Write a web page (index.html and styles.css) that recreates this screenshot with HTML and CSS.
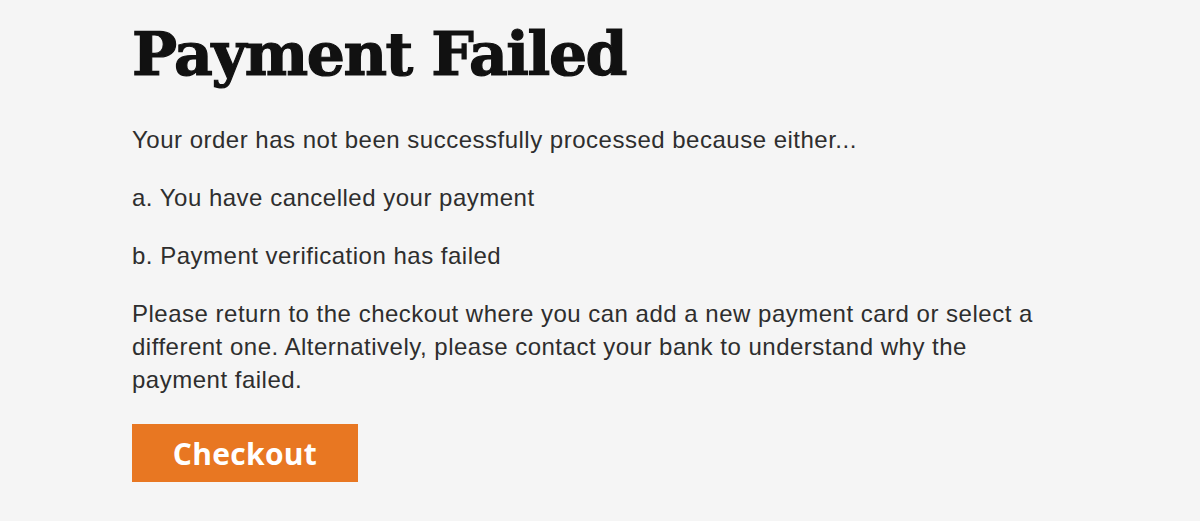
FILE: index.html
```html
<!DOCTYPE html>
<html lang="en">
<head>
<meta charset="utf-8">
<title>Payment Failed</title>
<link rel="stylesheet" href="styles.css">
</head>
<body>
<main class="page">
  <h1 class="title">Payment Failed</h1>
  <p class="text">Your order has not been successfully processed because either...</p>
  <p class="text">a. You have cancelled your payment</p>
  <p class="text">b. Payment verification has failed</p>
  <p class="text">Please return to the checkout where you can add a new payment card or select a different one. Alternatively, please contact your bank to understand why the payment failed.</p>
  <a class="button" href="#">Checkout</a>
</main>
</body>
</html>
```

FILE: styles.css
```css
html, body {
  margin: 0;
  padding: 0;
  background: #f5f5f5;
}
.page {
  width: 936px;
  margin: 0 auto;
  padding-top: 16px;
  font-family: "Liberation Sans", Arial, sans-serif;
  color: #2e2e2e;
}
.title {
  margin: 0 0 31px;
  font-family: "DejaVu Serif", serif;
  font-weight: bold;
  font-size: 60px;
  line-height: 76px;
  color: #111111;
  letter-spacing: -1.5px;
  -webkit-text-stroke: 1.2px #111111;
}
.text {
  margin: 0 0 25px;
  font-size: 24px;
  line-height: 33px;
  letter-spacing: 0.5px;
}
.button {
  display: inline-flex;
  align-items: center;
  justify-content: center;
  width: 226px;
  height: 58px;
  margin-top: 3px;
  background: #e87722;
  color: #ffffff;
  font-family: "Open Sans", sans-serif;
  font-weight: bold;
  font-size: 30px;
  letter-spacing: 0.3px;
  text-decoration: none;
}
```
